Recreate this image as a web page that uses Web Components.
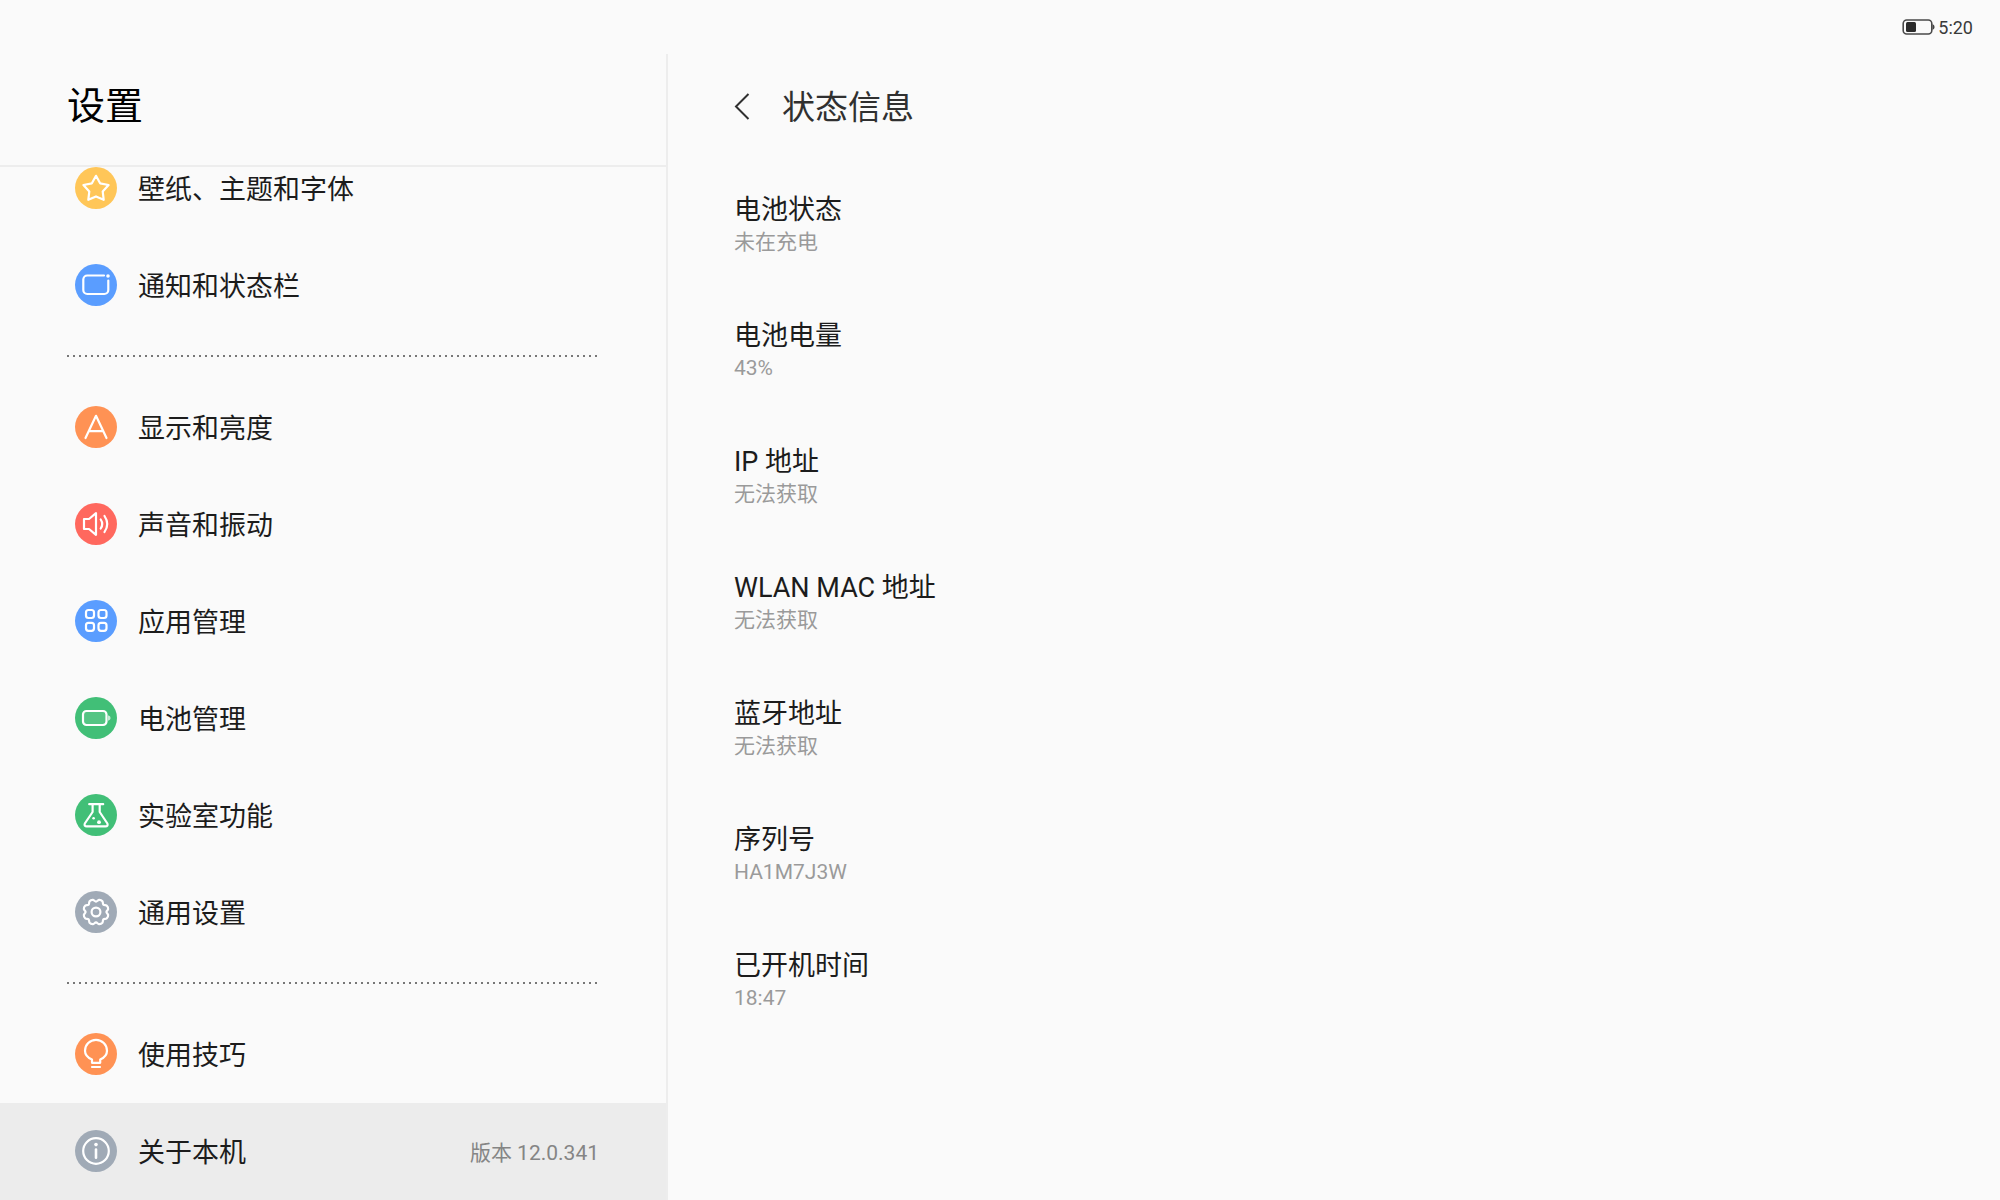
<!DOCTYPE html>
<html lang="zh-CN">
<head>
<meta charset="utf-8">
<meta name="viewport" content="width=device-width, initial-scale=1">
<title>设置</title>
<style>
  :root {
    --color-bg: #fafafa;
    --color-line: #ededed;
    --color-text: #1c1c1c;
    --color-muted: #9a9a9a;
    --font-md: 27px;
    --font-sm: 21px;
  }
  html, body {
    height: 100%;
    margin: 0;
  }
  body {
    background: var(--color-bg);
    color: var(--color-text);
    font-family: Roboto, "Noto Sans CJK SC", sans-serif;
  }
</style>
</head>
<body>
<settings-app>
  <status-bar slot="status" time="5:20"></status-bar>

  <settings-sidebar slot="sidebar" heading="设置">
    <settings-item icon="star" color="#ffc658">壁纸、主题和字体</settings-item>
    <settings-item icon="panel" color="#5a9dff">通知和状态栏</settings-item>
    <dotted-divider></dotted-divider>
    <settings-item icon="display" color="#ff9254">显示和亮度</settings-item>
    <settings-item icon="sound" color="#ff685e">声音和振动</settings-item>
    <settings-item icon="apps" color="#5a9dff">应用管理</settings-item>
    <settings-item icon="battery" color="#41bf77">电池管理</settings-item>
    <settings-item icon="lab" color="#41bf77">实验室功能</settings-item>
    <settings-item icon="gear" color="#a0aab6">通用设置</settings-item>
    <dotted-divider></dotted-divider>
    <settings-item icon="bulb" color="#ff9254">使用技巧</settings-item>
    <settings-item icon="info" color="#a0aab6" selected>关于本机<span slot="note">版本 12.0.341</span></settings-item>
  </settings-sidebar>

  <status-page slot="page" heading="状态信息">
    <status-entry label="电池状态">未在充电</status-entry>
    <status-entry label="电池电量">43%</status-entry>
    <status-entry label="IP 地址">无法获取</status-entry>
    <status-entry label="WLAN MAC 地址">无法获取</status-entry>
    <status-entry label="蓝牙地址">无法获取</status-entry>
    <status-entry label="序列号">HA1M7J3W</status-entry>
    <status-entry label="已开机时间">18:47</status-entry>
  </status-page>
</settings-app>

<script>
// Eight rounded teeth around (21, 21), with a notch at the top
function gearPath() {
  const point = (radius, degrees) => {
    const a = (degrees - 90) * Math.PI / 180;
    return `${(21 + radius * Math.cos(a)).toFixed(2)} ${(21 + radius * Math.sin(a)).toFixed(2)}`;
  };
  let d = `M${point(10.4, 0)}`;
  for (let i = 0; i < 8; i++) {
    const a = i * 45;
    d += `C${point(10.6, a + 7)} ${point(12, a + 8)} ${point(12.5, a + 14)}`;
    d += `Q${point(13.3, a + 22.5)} ${point(12.5, a + 31)}`;
    d += `C${point(12, a + 37)} ${point(10.6, a + 38)} ${point(10.4, a + 45)}`;
  }
  return d + 'Z';
}

const icons = {
  star: '<path d="M21 8.8L25.1 16.3L33.6 18L27.7 24.4L28.7 32.8L21 29.4L13.3 32.8L14.3 24.4L8.4 18L16.9 16.3Z"/>',
  panel: `<path d="M29 11.5H12.3a4 4 0 0 0-4 4V26a4 4 0 0 0 4 4H29.3a4 4 0 0 0 4-4V16.5"/>
    <circle cx="33" cy="12" r="1.8" fill="#fff" stroke="none"/>`,
  display: '<path d="M10.5 32L21 9.8L31.5 32M14 25.2H28"/>',
  sound: '<path d="M9 16H14L21 10.2V31.8L14 26H9ZM25.7 16.5Q28.8 21 25.7 25.5M29.5 13Q35 21 29.5 29"/>',
  apps: `<rect x="11" y="10" width="8" height="8" rx="2.5"/><rect x="23.5" y="10" width="8" height="8" rx="2.5"/>
    <rect x="11" y="22.8" width="8" height="8" rx="2.5"/><rect x="23.5" y="22.8" width="8" height="8" rx="2.5"/>`,
  battery: `<rect x="8" y="14" width="23.5" height="14" rx="3.5" fill="rgba(255,255,255,.1)"/>
    <path d="M33 18.3Q35.6 19 35.6 21T33 23.7Z" fill="rgba(255,255,255,.7)" stroke="none"/>`,
  lab: `<path d="M14.2 10.2H28.2M17.6 10.5V18L9.8 29.5Q8.8 32.4 11.8 32.4H30.4Q33.4 32.4 32.4 29.5L24.7 18V10.5"/>
    <g fill="#fff" stroke="none"><circle cx="18.6" cy="24.3" r="1.3"/><circle cx="24" cy="28.2" r="1.9"/></g>`,
  gear: `<path d="${gearPath()}"/><circle cx="21" cy="21" r="4.4"/>`,
  bulb: '<path d="M17 29.8V26.6Q10 23.6 10 17.8A11 11 0 0 1 32 17.8Q32 23.6 25.2 26.6V29.8ZM17 34H25"/>',
  info: `<circle cx="21" cy="21" r="12.8"/><path d="M21 19.6V27.8" stroke-width="2.6"/>
    <circle cx="21" cy="14.6" r="1.8" fill="#fff" stroke="none"/>`,
};

class SettingsApp extends HTMLElement {
  constructor() {
    super();
    this.attachShadow({ mode: 'open' }).innerHTML = `
      <style>
        :host {
          display: flex;
          flex-direction: column;
          height: 100vh;
        }
        main {
          display: flex;
          flex: 1;
          min-height: 0;
        }
        slot[name="sidebar"]::slotted(*) {
          flex: 0 0 33.4%;
        }
        slot[name="page"]::slotted(*) {
          flex: 1;
        }
      </style>
      <slot name="status"></slot>
      <main>
        <slot name="sidebar"></slot>
        <slot name="page"></slot>
      </main>
    `;
  }
}

class StatusBar extends HTMLElement {
  constructor() {
    super();
    this.attachShadow({ mode: 'open' }).innerHTML = `
      <style>
        :host {
          display: flex;
          align-items: center;
          justify-content: flex-end;
          gap: 3px;
          height: 54px;
          padding-right: 27px;
          color: #3a3a3a;
          font-size: 18px;
        }
        svg {
          display: block;
        }
      </style>
      <svg width="33" height="18" viewBox="0 0 33 18" aria-hidden="true">
        <rect x="1.2" y="2" width="28.6" height="14" rx="3.5" fill="none" stroke="#4a4a4a" stroke-width="1.6"/>
        <path d="M30.5 6Q32.6 7 32.6 9T30.5 12Z" fill="#444"/>
        <rect x="4" y="4" width="10" height="10" rx="1.5" fill="#2b2b2b"/>
      </svg>
      <time></time>
    `;
  }

  connectedCallback() {
    this.shadowRoot.querySelector('time').textContent = this.getAttribute('time');
  }
}

class SettingsSidebar extends HTMLElement {
  constructor() {
    super();
    this.attachShadow({ mode: 'open' }).innerHTML = `
      <style>
        :host {
          display: flex;
          flex-direction: column;
          box-sizing: border-box;
          min-height: 0;
          border-right: 2px solid var(--color-line);
        }
        header {
          padding: 24px 67px 31px;
          border-bottom: 2px solid var(--color-line);
        }
        h1 {
          margin: 0;
          color: #000;
          font-size: 38px;
          font-weight: 400;
          line-height: 56px;
        }
        nav {
          flex: 1;
          min-height: 0;
          overflow-y: auto;
          scrollbar-width: none;
        }
      </style>
      <header><h1></h1></header>
      <nav><slot></slot></nav>
    `;
  }

  connectedCallback() {
    this.shadowRoot.querySelector('h1').textContent = this.getAttribute('heading');
  }

  // Brings the end of the list, with the selected item, into view
  scrollToEnd() {
    const nav = this.shadowRoot.querySelector('nav');
    nav.scrollTop = nav.scrollHeight;
  }
}

class SettingsItem extends HTMLElement {
  constructor() {
    super();
    this.attachShadow({ mode: 'open' }).innerHTML = `
      <style>
        :host {
          display: block;
        }
        a {
          display: flex;
          align-items: center;
          box-sizing: border-box;
          gap: 21px;
          height: 97px;
          padding: 0 67px 2px 75px;
          color: inherit;
          font-size: var(--font-md);
          line-height: 36px;
          text-decoration: none;
        }
        :host([selected]) a {
          background: #ececec;
        }
        svg {
          flex: none;
          width: 42px;
          height: 42px;
          border-radius: 50%;
        }
        span {
          padding-top: 4px;
        }
        .label {
          flex: 1;
        }
        .note {
          color: #858585;
          font-size: var(--font-sm);
        }
      </style>
      <a href="#">
        <svg viewBox="0 0 42 42" fill="none" stroke="#fff" stroke-width="2.2"
          stroke-linecap="round" stroke-linejoin="round" aria-hidden="true"></svg>
        <span class="label"><slot></slot></span>
        <span class="note"><slot name="note"></slot></span>
      </a>
    `;
  }

  connectedCallback() {
    const svg = this.shadowRoot.querySelector('svg');
    svg.style.background = this.getAttribute('color');
    svg.innerHTML = icons[this.getAttribute('icon')];
    if (this.hasAttribute('selected')) {
      this.shadowRoot.querySelector('a').setAttribute('aria-current', 'page');
    }
  }
}

class DottedDivider extends HTMLElement {
  constructor() {
    super();
    this.attachShadow({ mode: 'open' }).innerHTML = `
      <style>
        :host {
          display: block;
          padding: 21px 67px 22px;
        }
        hr {
          height: 2px;
          margin: 0;
          border: 0;
          background: repeating-linear-gradient(to right, #777 0 2px, transparent 2px 6px);
        }
      </style>
      <hr>
    `;
  }
}

class StatusPage extends HTMLElement {
  constructor() {
    super();
    this.attachShadow({ mode: 'open' }).innerHTML = `
      <style>
        :host {
          display: block;
          padding: 0 66px;
        }
        header {
          display: flex;
          align-items: center;
          gap: 32px;
          height: 107px;
        }
        button {
          display: block;
          padding: 0;
          border: 0;
          background: none;
          cursor: pointer;
        }
        svg {
          display: block;
        }
        h2 {
          margin: 0;
          color: #303030;
          font-size: 33px;
          font-weight: 400;
          line-height: 44px;
        }
      </style>
      <header>
        <button type="button" aria-label="返回">
          <svg width="16" height="30" viewBox="0 0 16 30" fill="none" stroke="#303030" stroke-width="2">
            <path d="M14.5 1L2 13.5L14.5 26"/>
          </svg>
        </button>
        <h2></h2>
      </header>
      <slot></slot>
    `;
  }

  connectedCallback() {
    this.shadowRoot.querySelector('h2').textContent = this.getAttribute('heading');
  }
}

class StatusEntry extends HTMLElement {
  constructor() {
    super();
    this.attachShadow({ mode: 'open' }).innerHTML = `
      <style>
        :host {
          display: block;
          padding: 31px 0;
        }
        h3, p {
          margin: 0;
          font-weight: 400;
        }
        h3 {
          font-size: var(--font-md);
          line-height: 36px;
        }
        p {
          color: var(--color-muted);
          font-size: var(--font-sm);
          line-height: 28px;
        }
      </style>
      <h3></h3>
      <p><slot></slot></p>
    `;
  }

  connectedCallback() {
    this.shadowRoot.querySelector('h3').textContent = this.getAttribute('label');
  }
}

customElements.define('settings-app', SettingsApp);
customElements.define('status-bar', StatusBar);
customElements.define('settings-sidebar', SettingsSidebar);
customElements.define('settings-item', SettingsItem);
customElements.define('dotted-divider', DottedDivider);
customElements.define('status-page', StatusPage);
customElements.define('status-entry', StatusEntry);

document.querySelector('settings-sidebar').scrollToEnd();
</script>
</body>
</html>
